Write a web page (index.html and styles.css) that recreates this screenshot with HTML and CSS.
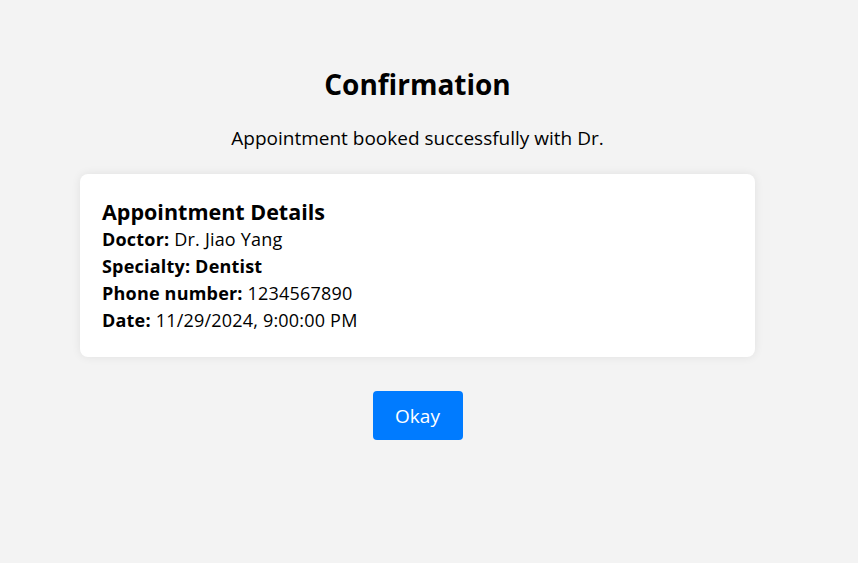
FILE: index.html
```html
<!DOCTYPE html>
<html>
<head>
<meta charset="utf-8">
<link rel="stylesheet" href="styles.css">
</head>
<body>
<main class="page">
  <h1 class="title">Confirmation</h1>
  <p class="subtitle">Appointment booked successfully with Dr.</p>
  <section class="card">
    <h2 class="card-title">Appointment Details</h2>
    <p class="row"><b>Doctor:</b> Dr. Jiao Yang</p>
    <p class="row"><b>Specialty: Dentist</b></p>
    <p class="row"><b>Phone number:</b> 1234567890</p>
    <p class="row"><b>Date:</b> 11/29/2024, 9:00:00 PM</p>
  </section>
  <div class="actions">
    <button class="btn">Okay</button>
  </div>
</main>
</body>
</html>
```
FILE: styles.css
```css
html, body {
  margin: 0;
  padding: 0;
  background: #f3f3f3;
}
body {
  font-family: "Open Sans", "Noto Sans", sans-serif;
  color: #000;
  width: 835px;
}
.page {
  padding: 66px 80px 0;
  display: flex;
  flex-direction: column;
  align-items: stretch;
}
.title {
  margin: 0;
  text-align: center;
  font-size: 28px;
  font-weight: 700;
  line-height: 36px;
}
.subtitle {
  margin: 23px 0 0;
  text-align: center;
  font-size: 19px;
  line-height: 26px;
}
.card {
  margin-top: 23px;
  background: #fff;
  border-radius: 8px;
  box-shadow: 0 0 10px rgba(0,0,0,0.08);
  padding: 24px 22px 23px;
}
.card-title {
  margin: 0;
  font-size: 21.5px;
  font-weight: 700;
  line-height: 28px;
}
.row {
  margin: 0;
  font-size: 18px;
  letter-spacing: 0.2px;
  line-height: 27px;
}
.row b { font-weight: 700; }
.actions {
  display: flex;
  justify-content: center;
  margin-top: 34px;
}
.btn {
  width: 90px;
  height: 49px;
  border: none;
  border-radius: 4px;
  background: #007bff;
  color: #fff;
  font-family: inherit;
  font-size: 19px;
  cursor: pointer;
}
```
